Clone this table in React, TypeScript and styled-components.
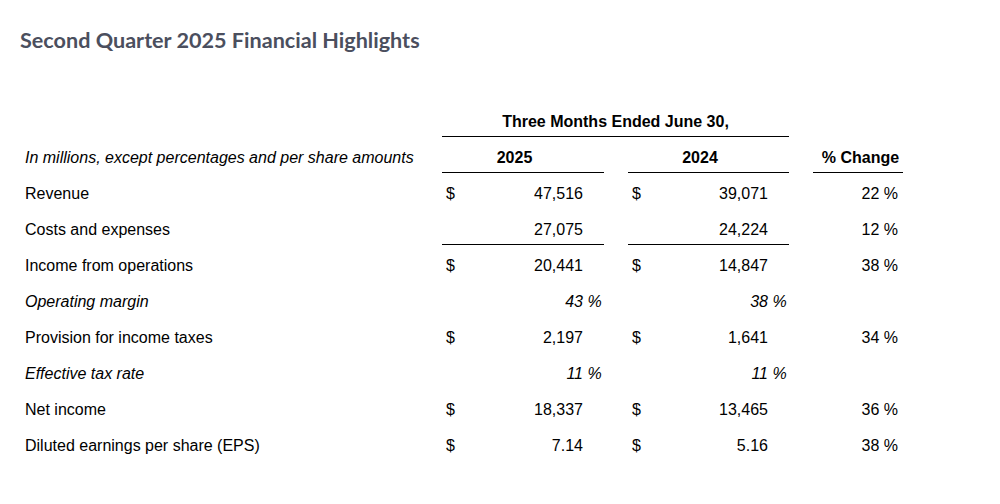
import { createGlobalStyle, styled } from "styled-components";

const GlobalStyle = createGlobalStyle`
  html, body {
    margin: 0;
    padding: 0;
    background: #fff;
  }
`;

const Page = styled.div`
  width: 1000px;
  height: 504px;
  padding: 26px 0 0 20px;
  box-sizing: border-box;
  overflow: hidden;
`;

const Title = styled.h2`
  margin: 0;
  font-family: Lato, "Open Sans", sans-serif;
  font-weight: 700;
  font-size: 21.6px;
  line-height: 28px;
  color: #4b4f5e;
`;

const Table = styled.div`
  margin: 47px 0 0 5px;
  font-family: "Liberation Sans", Arial, sans-serif;
  font-size: 16px;
  color: #000;
`;

const Row = styled.div`
  display: grid;
  grid-template-columns: 393px 162px 161px 90px;
  column-gap: 24px;
`;

const Cell = styled.div<{ $italic?: boolean; $bold?: boolean; $line?: boolean }>`
  height: 36px;
  box-sizing: border-box;
  padding-top: 12px;
  line-height: 18px;
  white-space: nowrap;
  font-style: ${(p) => (p.$italic ? "italic" : "normal")};
  font-weight: ${(p) => (p.$bold ? 700 : 400)};
  border-bottom: 1px solid ${(p) => (p.$line ? "#000" : "transparent")};
`;

const SpanCell = styled(Cell)`
  grid-column: 2 / 4;
  text-align: center;
`;

const YearCell = styled(Cell)`
  text-align: center;
  padding-right: 17px;
`;

const ChangeHead = styled(Cell)`
  text-align: center;
  padding-left: 5px;
`;

const Amount = styled(Cell)`
  display: grid;
  grid-template-columns: 1fr auto 21px;
  padding-left: 4px;
`;

const Currency = styled.span``;

const Value = styled.span`
  text-align: right;
`;

const Suffix = styled.span`
  white-space: pre;
`;

const Change = styled(Cell)`
  text-align: right;
  padding-right: 5px;
`;

interface Figure {
  dollar?: boolean;
  value: string;
  suffix?: string;
}

interface LineItem {
  label: string;
  italic?: boolean;
  current: Figure;
  prior: Figure;
  change?: string;
  line?: boolean;
}

const items: LineItem[] = [
  { label: "Revenue", current: { dollar: true, value: "47,516" }, prior: { dollar: true, value: "39,071" }, change: "22 %" },
  { label: "Costs and expenses", current: { value: "27,075" }, prior: { value: "24,224" }, change: "12 %", line: true },
  { label: "Income from operations", current: { dollar: true, value: "20,441" }, prior: { dollar: true, value: "14,847" }, change: "38 %" },
  { label: "Operating margin", italic: true, current: { value: "43", suffix: " %" }, prior: { value: "38", suffix: " %" } },
  { label: "Provision for income taxes", current: { dollar: true, value: "2,197" }, prior: { dollar: true, value: "1,641" }, change: "34 %" },
  { label: "Effective tax rate", italic: true, current: { value: "11", suffix: " %" }, prior: { value: "11", suffix: " %" } },
  { label: "Net income", current: { dollar: true, value: "18,337" }, prior: { dollar: true, value: "13,465" }, change: "36 %" },
  { label: "Diluted earnings per share (EPS)", current: { dollar: true, value: "7.14" }, prior: { dollar: true, value: "5.16" }, change: "38 %" },
];

function AmountCell({ figure, italic, line }: { figure: Figure; italic?: boolean; line?: boolean }) {
  return (
    <Amount $italic={italic} $line={line}>
      <Currency>{figure.dollar ? "$" : ""}</Currency>
      <Value>{figure.value}</Value>
      <Suffix>{figure.suffix ?? ""}</Suffix>
    </Amount>
  );
}

export default function App() {
  return (
    <Page>
      <GlobalStyle />
      <Title>Second Quarter 2025 Financial Highlights</Title>
      <Table>
        <Row>
          <Cell />
          <SpanCell $bold $line>
            Three Months Ended June 30,
          </SpanCell>
          <Cell />
        </Row>
        <Row>
          <Cell $italic>In millions, except percentages and per share amounts</Cell>
          <YearCell $bold $line>2025</YearCell>
          <YearCell $bold $line>2024</YearCell>
          <ChangeHead $bold $line>% Change</ChangeHead>
        </Row>
        {items.map((item) => (
          <Row key={item.label}>
            <Cell $italic={item.italic}>{item.label}</Cell>
            <AmountCell figure={item.current} italic={item.italic} line={item.line} />
            <AmountCell figure={item.prior} italic={item.italic} line={item.line} />
            <Change>{item.change ?? ""}</Change>
          </Row>
        ))}
      </Table>
    </Page>
  );
}
